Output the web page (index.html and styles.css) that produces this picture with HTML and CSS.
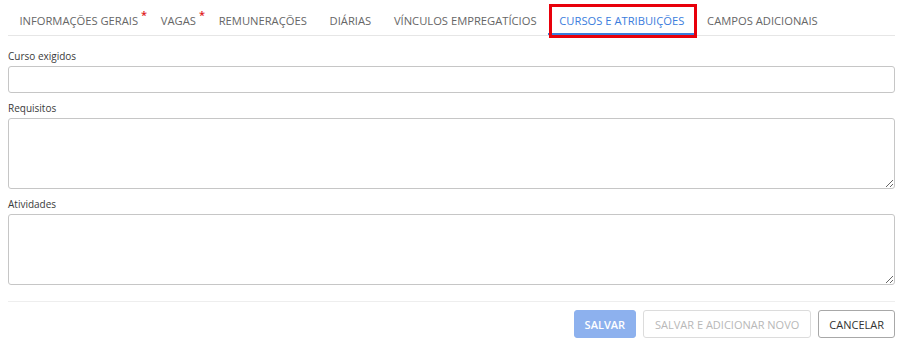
FILE: index.html
```html
<!DOCTYPE html>
<html lang="pt-BR">
<head>
<meta charset="utf-8">
<title>Cursos e atribuições</title>
<link rel="stylesheet" href="styles.css">
</head>
<body>
<div class="page">
  <nav class="tabs">
    <a class="tab">INFORMAÇÕES GERAIS<span class="req">*</span></a>
    <a class="tab">VAGAS<span class="req">*</span></a>
    <a class="tab">REMUNERAÇÕES</a>
    <a class="tab">DIÁRIAS</a>
    <a class="tab">VÍNCULOS EMPREGATÍCIOS</a>
    <a class="tab active">CURSOS E ATRIBUIÇÕES</a>
    <a class="tab">CAMPOS ADICIONAIS</a>
  </nav>
  <form class="form">
    <div class="field">
      <label class="label">Curso exigidos</label>
      <input class="input" type="text">
    </div>
    <div class="field">
      <label class="label">Requisitos</label>
      <textarea class="textarea"></textarea>
    </div>
    <div class="field">
      <label class="label">Atividades</label>
      <textarea class="textarea"></textarea>
    </div>
    <div class="footer">
      <button type="button" class="btn btn-primary">SALVAR</button>
      <button type="button" class="btn btn-disabled">SALVAR E ADICIONAR NOVO</button>
      <button type="button" class="btn btn-default">CANCELAR</button>
    </div>
  </form>
</div>
</body>
</html>
```
FILE: styles.css
```css
* { box-sizing: border-box; }
html, body { margin: 0; padding: 0; background: #fff; }
body { font-family: "Open Sans", "Liberation Sans", sans-serif; color: #333; }

.page { padding: 7px 9px 0 8px; }

.tabs {
  display: flex;
  border-bottom: 1px solid #e6e6e6;
}
.tab {
  position: relative;
  display: block;
  padding: 0 11.4px;
  height: 28px;
  line-height: 28px;
  font-size: 11.2px;
  color: #666;
  white-space: nowrap;
}
.req {
  position: absolute;
  top: -6px;
  margin-left: 3px;
  color: #e02020;
  font-size: 11px;
  font-weight: 600;
}
.tab.active {
  color: #3b7ddd;
  box-shadow: inset 0 -2px 0 #3b7ddd;
}
.tab.active::after {
  content: "";
  position: absolute;
  top: -3px;
  left: 1px;
  right: -1px;
  bottom: -3px;
  border: 3px solid #e8000b;
}

.form { margin: 13px 0 0; }
.field { display: flex; flex-direction: column; margin-bottom: 8px; }
.label {
  font-size: 10px;
  line-height: 14px;
  color: #3a3a3a;
  margin-bottom: 3px;
}
.input, .textarea {
  width: 100%;
  border: 1px solid #c6c6c6;
  border-radius: 3px;
  background: #fff;
  font-family: inherit;
  font-size: 12px;
  margin: 0;
}
.input { height: 27px; padding: 0 8px; }
.textarea { height: 71px; padding: 6px 8px; resize: vertical; display: block; }

.footer {
  margin-top: 16px;
  border-top: 1px solid #eee;
  padding-top: 8px;
  display: flex;
  justify-content: flex-end;
  gap: 7px;
}
.btn {
  height: 28px;
  padding: 0 11px;
  font-family: inherit;
  font-size: 11px;
  border-radius: 3px;
  background: #fff;
  margin: 0;
}
.btn-primary {
  background: #8db1ee;
  border: 1px solid #8db1ee;
  color: #fff;
  font-weight: 600;
  padding: 0 10px;
}
.btn-disabled {
  border: 1px solid #dcdcdc;
  color: #b8b8b8;
}
.btn-default {
  border: 1px solid #a8a8a8;
  color: #333;
  padding: 0 10px;
}
```
